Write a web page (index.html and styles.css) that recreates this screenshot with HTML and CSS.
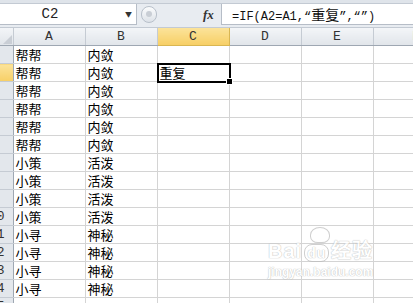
FILE: index.html
```html
<!DOCTYPE html>
<html lang="zh-CN">
<head>
  <meta charset="UTF-8" />
  <title>Excel - 重复</title>
  <link rel="stylesheet" href="styles.css">
</head>
<body>

<div class="window">
    <div class="top-strip"></div>

    <div class="formula-bar">
        <div class="name-box">
            <span class="cell-ref">C2</span>
            <span class="drop">&#9660;</span>
        </div>
        <div class="splitter"><span class="knob"></span></div>
        <div class="fx">fx</div>
        <div class="formula">=IF(A2=A1,“<span class="cjk">重复</span>”,“”)</div>
    </div>

    <div class="gap-strip"></div>

    <div class="sheet-wrap">
        <table class="sheet">
            <colgroup>
                <col class="c-row"><col class="c-col"><col class="c-col"><col class="c-col"><col class="c-col"><col class="c-col"><col>
            </colgroup>
            <thead>
                <tr>
                    <th class="corner"><span class="tri"></span></th>
                    <th>A</th><th>B</th><th class="hl">C</th><th>D</th><th>E</th><th>F</th>
                </tr>
            </thead>
            <tbody id="rows"></tbody>
        </table>

        <div class="watermark">
            <div class="wm-top"><span class="paw"></span></div>
            <div class="wm-brand">Bai<span class="du">du</span>经验</div>
            <div class="wm-url">jingyan.baidu.com</div>
        </div>
    </div>
</div>

<script>
const data = [
    ["帮帮", "内敛"], ["帮帮", "内敛"], ["帮帮", "内敛"], ["帮帮", "内敛"], ["帮帮", "内敛"], ["帮帮", "内敛"],
    ["小策", "活泼"], ["小策", "活泼"], ["小策", "活泼"], ["小策", "活泼"],
    ["小寻", "神秘"], ["小寻", "神秘"], ["小寻", "神秘"], ["小寻", "神秘"], ["", ""]
];

const body = document.getElementById("rows");
data.forEach((r, i) => {
    const n = i + 1;
    const c = n === 2 ? '<td class="sel"><div class="sel-box">重复<span class="handle"></span></div></td>' : "<td></td>";
    body.innerHTML += `<tr><th class="rh${n === 2 ? " hl" : ""}"><div class="num">${n}</div></th>
        <td>${r[0]}</td><td>${r[1]}</td>${c}<td></td><td></td><td></td></tr>`;
});
</script>

</body>
</html>
```

FILE: styles.css
```css
body {
    margin: 0;
    padding: 0;
    background: #ffffff;
    font-family: "Noto Sans CJK SC", sans-serif;
    overflow: hidden;
}

.window {
    width: 413px;
    height: 303px;
    overflow: hidden;
}

.top-strip {
    height: 3px;
    background: #dfe4ea;
    border-bottom: 1px solid #c3cad3;
}

.formula-bar {
    display: flex;
    height: 21px;
    background: #e8ecf1;
}

.name-box {
    width: 136px;
    display: flex;
    align-items: center;
    justify-content: space-between;
    background: #fff;
    border-right: 1px solid #b6bdc7;
    border-bottom: 1px solid #b6bdc7;
}

.cell-ref {
    width: 100px;
    text-align: center;
    font-family: "Liberation Mono", monospace;
    font-size: 14px;
    color: #222;
}

.drop {
    font-size: 7px;
    color: #333;
    margin-right: 4px;
}

.splitter {
    width: 62px;
    display: flex;
    align-items: center;
    padding-left: 4px;
}

.knob {
    width: 14px;
    height: 15px;
    border-radius: 8px;
    border: 1px solid #b8c0ca;
    background: linear-gradient(#fbfcfd, #dde2e8);
    position: relative;
}

.knob::after {
    content: "";
    position: absolute;
    left: 4px;
    top: 4px;
    width: 6px;
    height: 6px;
    border-radius: 50%;
    background: #c9ced5;
}

.fx {
    width: 18px;
    font-family: "Liberation Serif", serif;
    font-style: italic;
    font-weight: bold;
    font-size: 13px;
    line-height: 21px;
    color: #333;
}

.formula {
    flex: 1;
    background: #fff;
    border-left: 1px solid #b6bdc7;
    border-bottom: 1px solid #b6bdc7;
    padding-left: 10px;
    font-family: "Liberation Mono", "Noto Sans CJK SC", monospace;
    font-size: 12px;
    line-height: 21px;
    color: #111;
    white-space: nowrap;
}

.formula .cjk {
    font-family: "Noto Sans CJK SC", sans-serif;
    font-size: 14px;
}

.gap-strip {
    height: 2px;
    background: #e8ecf1;
    border-bottom: 1px solid #c3cad3;
}

.sheet-wrap {
    position: relative;
}

.sheet {
    border-collapse: collapse;
    table-layout: fixed;
    width: 460px;
}

.c-row { width: 13px; }
.c-col { width: 72px; }

.sheet th,
.sheet td {
    height: 17px;
    padding: 0;
    border: 1px solid #d4d4d4;
    font-weight: normal;
    white-space: nowrap;
    overflow: hidden;
}

.sheet thead th {
    background: linear-gradient(#f3f5f8, #e1e5ea);
    border-color: #c5cbd3;
    border-bottom: 1px solid #9ea7b2;
    font-family: "Liberation Mono", monospace;
    font-size: 13px;
    color: #333;
    text-align: center;
    border-top: none;
}

.sheet thead th.hl,
.sheet th.rh.hl {
    background: linear-gradient(#fbe39a, #f7cf66);
    border-color: #d9b652;
}

.corner {
    position: relative;
    border-left: none !important;
}

.tri {
    position: absolute;
    right: 1px;
    bottom: 1px;
    border-left: 9px solid transparent;
    border-bottom: 9px solid #c9ced5;
}

.rh {
    background: #e3e7ec;
    border-left: none !important;
    border-color: #c5cbd3 !important;
    border-right: 1px solid #9ea7b2 !important;
}

.num {
    width: 13px;
    overflow: hidden;
    text-indent: -11px;
    font-family: "Liberation Mono", monospace;
    font-size: 13px;
    color: #333;
    text-align: left;
}

.sheet td {
    font-size: 13px;
    color: #000;
    padding-left: 2px;
    line-height: 17px;
}

.sheet td.sel {
    padding: 0;
    overflow: visible;
    position: relative;
}

.sel-box {
    position: absolute;
    left: -1px;
    top: -1px;
    right: -2px;
    bottom: -2px;
    border: 2px solid #000;
    padding-left: 1px;
    line-height: 15px;
}

.handle {
    position: absolute;
    right: -4px;
    bottom: -4px;
    width: 5px;
    height: 5px;
    background: #000;
    border: 1px solid #fff;
}

.watermark {
    position: absolute;
    left: 268px;
    top: 195px;
    width: 120px;
    font-family: "Liberation Sans", sans-serif;
    color: #fff;
    text-shadow: 0 0 1px #aaa, 0 0 1px #aaa;
    opacity: 0.7;
}

.wm-top {
    height: 18px;
    position: relative;
}

.paw {
    position: absolute;
    left: 42px;
    top: 4px;
    width: 18px;
    height: 14px;
    border: 1px solid #bbb;
    border-radius: 50% 50% 40% 40%;
}

.wm-brand {
    font-size: 20px;
    font-weight: bold;
    line-height: 20px;
    letter-spacing: 1px;
}

.du {
    font-size: 14px;
    border: 1px solid #bbb;
    border-radius: 8px;
    padding: 0 2px;
    margin: 0 2px;
}

.wm-url {
    font-size: 12px;
    font-weight: bold;
    line-height: 18px;
}
```
